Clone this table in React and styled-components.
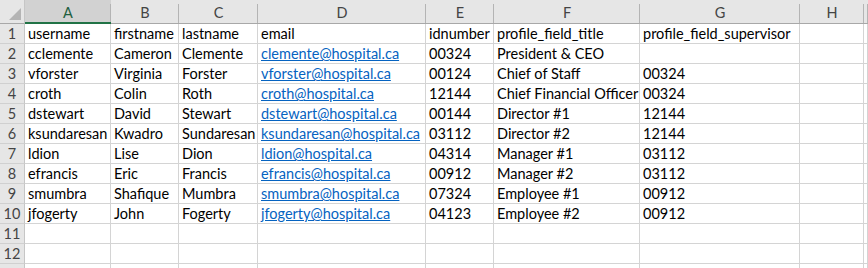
import React from "react";
import styled, { createGlobalStyle, css } from "styled-components";

const Global = createGlobalStyle`
  html, body { margin: 0; padding: 0; background: #fff; overflow: hidden; }
  body { font-family: Lato, "Liberation Sans", Arial, sans-serif; }
`;

const COLS = [
  { key: "A", w: 86 },
  { key: "B", w: 68 },
  { key: "C", w: 79 },
  { key: "D", w: 168 },
  { key: "E", w: 68 },
  { key: "F", w: 146 },
  { key: "G", w: 160 },
  { key: "H", w: 64 },
];

const DATA = [
  ["username", "firstname", "lastname", "email", "idnumber", "profile_field_title", "profile_field_supervisor"],
  ["cclemente", "Cameron", "Clemente", "clemente@hospital.ca", "00324", "President & CEO", ""],
  ["vforster", "Virginia", "Forster", "vforster@hospital.ca", "00124", "Chief of Staff", "00324"],
  ["croth", "Colin", "Roth", "croth@hospital.ca", "12144", "Chief Financial Officer", "00324"],
  ["dstewart", "David", "Stewart", "dstewart@hospital.ca", "00144", "Director #1", "12144"],
  ["ksundaresan", "Kwadro", "Sundaresan", "ksundaresan@hospital.ca", "03112", "Director #2", "12144"],
  ["ldion", "Lise", "Dion", "ldion@hospital.ca", "04314", "Manager #1", "03112"],
  ["efrancis", "Eric", "Francis", "efrancis@hospital.ca", "00912", "Manager #2", "03112"],
  ["smumbra", "Shafique", "Mumbra", "smumbra@hospital.ca", "07324", "Employee #1", "00912"],
  ["jfogerty", "John", "Fogerty", "jfogerty@hospital.ca", "04123", "Employee #2", "00912"],
];

const Sheet = styled.div`
  display: grid;
  grid-template-columns: 25px ${COLS.map((c) => c.w + "px").join(" ")} 1fr;
  grid-auto-rows: 20px;
  grid-template-rows: 24px;
  width: 868px;
  height: 268px;
  overflow: hidden;
  font-family: Lato, "Liberation Sans", Arial, sans-serif;
  font-size: 14.5px;
`;

const Corner = styled.div`
  box-sizing: border-box;
  background: #e6e6e6;
  border-right: 1px solid #c6c6c6;
  border-bottom: 1px solid #a8a8a8;
  display: flex;
  align-items: flex-end;
  justify-content: flex-end;
  padding: 0 3px 3px 0;
`;

const ColHeader = styled.div`
  box-sizing: border-box;
  background: linear-gradient(#b4b4b4, #b4b4b4) right bottom / 1px calc(100% - 4px) no-repeat, #e6e6e6;
  border-bottom: 1px solid #a8a8a8;
  color: #444;
  display: flex;
  align-items: center;
  justify-content: center;
  padding-top: 2px;
  font-size: 14.5px;
  ${(p) =>
    p.$selected &&
    css`
      background: linear-gradient(#b4b4b4, #b4b4b4) right bottom / 1px calc(100% - 4px) no-repeat, #d2d2d2;
      border-bottom: 2px solid #217346;
      color: #1f6040;
    `}
`;

const RowHeader = styled.div`
  box-sizing: border-box;
  background: #e6e6e6;
  border-right: 1px solid #c6c6c6;
  border-bottom: 1px solid #d0d0d0;
  color: #444;
  text-align: center;
  line-height: 20px;
  font-size: 14.5px;
`;

const Cell = styled.div`
  box-sizing: border-box;
  border-right: 1px solid #d4d4d4;
  border-bottom: 1px solid #d4d4d4;
  padding: 0 0 0 3px;
  line-height: 20px;
  color: #000;
  white-space: nowrap;
  overflow: hidden;
`;

const Link = styled.span`
  color: #0563c1;
  text-decoration: underline;
  text-underline-offset: 1px;
`;

const Triangle = () => (
  <svg width="12" height="12" viewBox="0 0 12 12">
    <polygon points="12,0 12,12 0,12" fill="#b4b4b4" />
  </svg>
);

export default function App() {
  const rows = [];
  for (let r = 1; r <= 13; r++) {
    const data = DATA[r - 1] || [];
    rows.push(<RowHeader key={`rh${r}`}>{r <= 12 ? r : ""}</RowHeader>);
    COLS.forEach((c, i) => {
      const v = data[i] || "";
      rows.push(
        <Cell key={`c${r}-${c.key}`}>
          {i === 3 && r > 1 && v ? <Link>{v}</Link> : v}
        </Cell>
      );
    });
    rows.push(<Cell key={`c${r}-I`} />);
  }
  return (
    <>
      <Global />
      <Sheet>
        <Corner>
          <Triangle />
        </Corner>
        {COLS.map((c) => (
          <ColHeader key={c.key} $selected={c.key === "A"}>
            {c.key}
          </ColHeader>
        ))}
        <ColHeader />
        {rows}
      </Sheet>
    </>
  );
}
